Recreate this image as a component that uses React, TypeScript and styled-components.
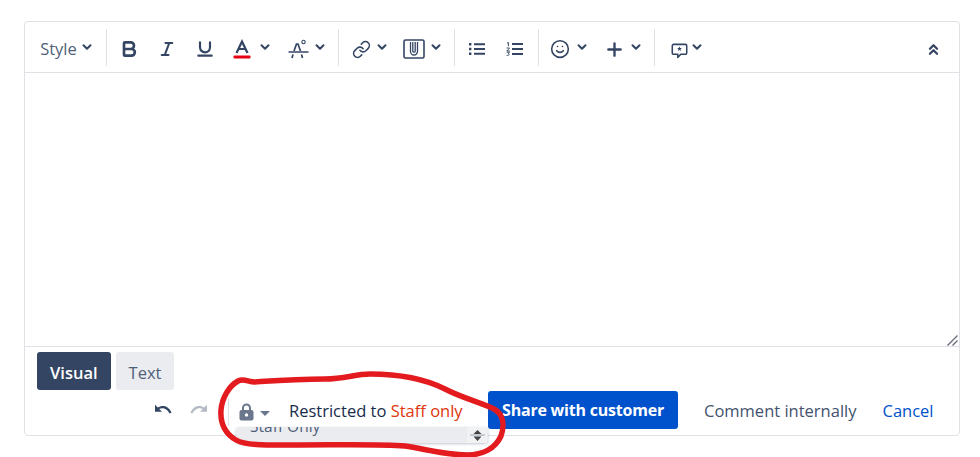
import React from 'react'
import styled, { createGlobalStyle } from 'styled-components'
import { Bold, ChevronDown, ChevronsUp, Italic, Link, Plus, Smile, Underline } from 'lucide-react'

const GlobalStyle = createGlobalStyle`
  html, body {
    margin: 0;
    padding: 0;
    background: #fff;
  }
  body {
    font-family: "Open Sans", "Noto Sans", sans-serif;
    color: #344563;
  }
`

const Page = styled.div`
  position: relative;
  width: 980px;
  height: 457px;
  padding: 21px 0 0 24px;
  box-sizing: border-box;
  overflow: hidden;
`
const Card = styled.div`
  position: relative;
  width: 936px;
  height: 415px;
  box-sizing: border-box;
  border: 1px solid #dfe1e6;
  border-radius: 4px;
  display: flex;
  flex-direction: column;
`
const Toolbar = styled.div`
  display: flex;
  align-items: center;
  height: 51px;
  flex: none;
  box-sizing: border-box;
  border-bottom: 1px solid #dfe1e6;
`
const Group = styled.div<{ $w: number; $pad?: number; $last?: boolean }>`
  display: flex;
  align-items: center;
  box-sizing: border-box;
  width: ${props => props.$w}px;
  height: 37px;
  padding-left: ${props => (props.$pad === undefined ? 3 : props.$pad)}px;
  border-right: ${props => (props.$last ? 'none' : '1px solid #dfe1e6')};
`
const ToolButton = styled.div<{ $w: number; $gap?: number }>`
  display: flex;
  align-items: center;
  justify-content: center;
  gap: ${props => props.$gap || 4}px;
  width: ${props => props.$w}px;
  height: 30px;
  padding-top: 4px;
  flex: none;
  color: #344563;
`
const ChevronWrap = styled.span`
  display: flex;
  margin-bottom: 4px;
`
const StyleLabel = styled.span`
  font-size: 16.5px;
  color: #505f79;
  margin-bottom: 2px;
`
const Collapse = styled.div`
  margin-left: auto;
  margin-right: 17px;
  padding-top: 4px;
  display: flex;
  color: #344563;
`
const EditorWrap = styled.div`
  position: relative;
  flex: none;
  height: 274px;
`
const Editor = styled.textarea`
  display: block;
  width: 100%;
  height: 100%;
  box-sizing: border-box;
  border: none;
  border-bottom: 1px solid #dfe1e6;
  outline: none;
  resize: none;
  margin: 0;
  padding: 8px;
  background: #fff;
`
const ResizeGrip = styled.svg`
  position: absolute;
  right: 1px;
  bottom: 1px;
  pointer-events: none;
`
const Tabs = styled.div`
  display: flex;
  gap: 5px;
  padding: 5px 0 0 12px;
`
const Tab = styled.div<{ $active?: boolean }>`
  height: 38px;
  box-sizing: border-box;
  padding: 2px 13px 0;
  display: flex;
  align-items: center;
  border-radius: 3px;
  font-size: 16.5px;
  font-weight: ${props => (props.$active ? 600 : 400)};
  background: ${props => (props.$active ? '#344563' : '#ebecf0')};
  color: ${props => (props.$active ? '#fff' : '#505f79')};
`
const ActionRow = styled.div`
  position: relative;
  display: flex;
  align-items: center;
  height: 38px;
  margin-top: 1px;
  padding-left: 128px;
`
const HistoryButton = styled.div<{ $disabled?: boolean }>`
  display: flex;
  width: 20px;
  margin-right: 16px;
  color: ${props => (props.$disabled ? '#b3bac5' : '#344563')};
`
const Restriction = styled.div`
  position: relative;
  z-index: 1;
  display: flex;
  align-items: center;
  width: 251px;
  height: 28px;
  margin-left: 3px;
  margin-top: 3px;
  box-sizing: border-box;
  border-left: 1px solid #dfe1e6;
  background: #fff;
  padding-left: 10px;
`
const LockWrap = styled.div`
  display: flex;
  align-items: center;
  gap: 6px;
  width: 50px;
  flex: none;
  color: #6b778c;
`
const Caret = styled.svg`
  margin-top: 4px;
`
const CommentIcon = styled.svg`
  margin-top: 4px;
`
const RestrictionText = styled.span`
  font-size: 16.5px;
  color: #172b4d;
  white-space: nowrap;
  margin-bottom: 3px;
`
const StaffOnly = styled.span`
  color: #de350b;
`
const HiddenSelect = styled.div`
  position: absolute;
  left: 211px;
  top: 36px;
  width: 252px;
  height: 16px;
  background: #ebecf0;
  border-radius: 3px;
  box-shadow: 0 1px 3px rgba(9, 30, 66, 0.25);
  overflow: hidden;
  font-size: 15.5px;
  color: #505f79;
`
const SelectValue = styled.span`
  position: absolute;
  left: 14px;
  top: -12px;
`
const SelectArrows = styled.div`
  position: absolute;
  right: 1px;
  top: 0;
  width: 20px;
  height: 16px;
  display: flex;
  align-items: center;
  justify-content: center;
  background: #f1f2f4;
  color: #444;
`
const ShareButton = styled.div`
  height: 38px;
  width: 190px;
  flex: none;
  margin-left: 9px;
  display: flex;
  align-items: center;
  justify-content: center;
  background: #0052cc;
  color: #fff;
  border-radius: 3px;
  font-size: 16px;
  font-weight: 700;
  letter-spacing: -0.22px;
  white-space: nowrap;
`
const TextAction = styled.div<{ $link?: boolean; $ml: number }>`
  margin-left: ${props => props.$ml}px;
  font-size: 16.5px;
  white-space: nowrap;
  color: ${props => (props.$link ? '#0052cc' : '#42526e')};
`
const Scribble = styled.svg`
  position: absolute;
  left: 0;
  top: 0;
  z-index: 5;
  pointer-events: none;
`

const Chevron = () => (
  <ChevronWrap>
    <ChevronDown size={14} strokeWidth={3.4} />
  </ChevronWrap>
)

const App: React.FC = () => (
  <Page>
    <GlobalStyle />
    <Card>
      <Toolbar>
        <Group $w={82} $pad={14}>
          <ToolButton $w={56} $gap={3}>
            <StyleLabel>Style</StyleLabel>
            <Chevron />
          </ToolButton>
        </Group>
        <Group $w={232}>
          <ToolButton $w={38}>
            <Bold size={20} strokeWidth={3.2} />
          </ToolButton>
          <ToolButton $w={37}>
            <Italic size={18} strokeWidth={2.8} />
          </ToolButton>
          <ToolButton $w={39}>
            <Underline size={20} strokeWidth={2.6} />
          </ToolButton>
          <ToolButton $w={56} $gap={7}>
            <svg width="18" height="20" viewBox="0 0 18 20" fill="none">
              <path d="M3.5 14 9 2.5 14.5 14M5.5 10h7" stroke="currentColor" strokeWidth="2.2" />
              <rect x="0.5" y="16.5" width="17" height="3" rx="1" fill="#e60012" />
            </svg>
            <Chevron />
          </ToolButton>
          <ToolButton $w={55}>
            <svg width="21" height="20" viewBox="0 0 21 20" fill="none" stroke="currentColor">
              <path d="M6 12 8.5 5h1.5L12.5 12" strokeWidth="1.7" />
              <circle cx="15.5" cy="3" r="1.7" strokeWidth="1.1" />
              <path d="M0.5 13h20" strokeWidth="1.5" />
              <path d="M5 15.5 4 19M13.5 15.5l1 3.5" strokeWidth="1.7" />
            </svg>
            <Chevron />
          </ToolButton>
        </Group>
        <Group $w={116}>
          <ToolButton $w={56}>
            <Link size={19} strokeWidth={2} />
            <Chevron />
          </ToolButton>
          <ToolButton $w={50}>
            <svg width="22" height="20" viewBox="0 0 22 20" fill="none" stroke="currentColor">
              <rect x="1" y="1" width="20" height="18" rx="1.5" strokeWidth="1.6" />
              <path d="M7.5 3v9.5a3.5 3.5 0 0 0 7 0V3M9.8 3v9a1.2 1.2 0 0 0 2.4 0V3" strokeWidth="1.3" />
            </svg>
            <Chevron />
          </ToolButton>
        </Group>
        <Group $w={84}>
          <ToolButton $w={38}>
            <svg width="16" height="12" viewBox="0 0 16 12" fill="none">
              <path d="M5 1.2h11M5 6h11M5 10.8h11" stroke="currentColor" strokeWidth="2" />
              <path d="M0 0h2.4v2.4H0ZM0 4.8h2.4v2.4H0ZM0 9.6h2.4V12H0Z" fill="currentColor" />
            </svg>
          </ToolButton>
          <ToolButton $w={37}>
            <svg width="17" height="14" viewBox="0 0 17 14" fill="none" stroke="currentColor">
              <path d="M6 2h11M6 7h11M6 12h11" strokeWidth="2" />
              <path d="M1 1 2.4.6v3.6" strokeWidth="1" />
              <path d="M.6 6h3L.8 9h3M.6 10.2h3L2 11.6c1.8 0 1.8 2-1.4 1.8" strokeWidth=".9" />
            </svg>
          </ToolButton>
        </Group>
        <Group $w={116}>
          <ToolButton $w={54} $gap={5}>
            <Smile size={20} strokeWidth={1.9} />
            <Chevron />
          </ToolButton>
          <ToolButton $w={54}>
            <Plus size={21} strokeWidth={2.7} />
            <Chevron />
          </ToolButton>
        </Group>
        <Group $w={60} $pad={16} $last>
          <ToolButton $w={33} $gap={2}>
            <CommentIcon width="20" height="18" viewBox="0 0 20 18" fill="none">
              <path
                d="M3 1.2h14a1.5 1.5 0 0 1 1.5 1.5v8.6a1.5 1.5 0 0 1-1.5 1.5h-5.5L8 16.6v-3.8H3a1.5 1.5 0 0 1-1.5-1.5V2.7A1.5 1.5 0 0 1 3 1.2Z"
                stroke="currentColor"
                strokeWidth="1.8"
                strokeLinejoin="round"
              />
              <path d="m10 3.6.8 1.9 2 .1-1.6 1.3.6 2-1.8-1.1-1.8 1.1.6-2-1.6-1.3 2-.1Z" fill="currentColor" />
            </CommentIcon>
            <Chevron />
          </ToolButton>
        </Group>
        <Collapse>
          <ChevronsUp size={17} strokeWidth={3.2} />
        </Collapse>
      </Toolbar>
      <EditorWrap>
        <Editor />
        <ResizeGrip width="11" height="11" viewBox="0 0 11 11" fill="none" stroke="#666c78" strokeWidth="1.4">
          <path d="M0.5 10.5 10.5 0.5M5.5 10.5l5-5" />
        </ResizeGrip>
      </EditorWrap>
      <Tabs>
        <Tab $active>Visual</Tab>
        <Tab>Text</Tab>
      </Tabs>
      <ActionRow>
        <HistoryButton>
          <svg width="20" height="12" viewBox="0 0 20 12" fill="none">
            <path d="M2 0.8v7h7L6.2 5C9 3.6 13.5 3.6 16.6 9.6l2-1C15.2 1.4 9 .7 4.8 3.5Z" fill="currentColor" />
          </svg>
        </HistoryButton>
        <HistoryButton $disabled>
          <svg width="20" height="12" viewBox="0 0 20 12" fill="none">
            <path d="M18 0.8v7h-7L13.8 5C11 3.6 6.5 3.6 3.4 9.6l-2-1C4.8 1.4 11 .7 15.2 3.5Z" fill="currentColor" />
          </svg>
        </HistoryButton>
        <Restriction>
          <LockWrap>
            <svg width="15" height="18" viewBox="0 0 15 18" fill="none">
              <path d="M4 8V5a3.5 3.5 0 0 1 7 0v3" stroke="currentColor" strokeWidth="2" />
              <rect x="0.5" y="7" width="14" height="10.5" rx="2" fill="currentColor" />
              <circle cx="7.5" cy="12" r="1.7" fill="#fff" />
            </svg>
            <Caret width="10" height="5" viewBox="0 0 10 5">
              <path d="M0 0h10L5 5Z" fill="currentColor" />
            </Caret>
          </LockWrap>
          <RestrictionText>
            Restricted to <StaffOnly>Staff only</StaffOnly>
          </RestrictionText>
        </Restriction>
        <HiddenSelect>
          <SelectValue>Staff Only</SelectValue>
          <SelectArrows>
            <svg width="15" height="14" viewBox="0 0 15 14">
              <path d="M7.5 2 11.5 6h-8ZM7.5 13 11.5 8.5h-8Z" fill="currentColor" />
              <path d="M0 7h15" stroke="#9aa3b2" strokeWidth="1" />
            </svg>
          </SelectArrows>
        </HiddenSelect>
        <ShareButton>Share with customer</ShareButton>
        <TextAction $ml={26}>Comment internally</TextAction>
        <TextAction $ml={26} $link>
          Cancel
        </TextAction>
      </ActionRow>
    </Card>
    <Scribble width="980" height="457" viewBox="0 0 980 457" fill="none">
      <path
        d="M238 381C229 386 222 398 221 410C220 424 226 434 236 440C246 446 270 445 300 445C340 445 380 444 405 446C425 449 445 455 467 455C482 455 495 449 501 436C505 424 503 414 494 409C480 402 462 398 445 389C425 379 400 374 370 374C355 374 345 379 325 379C295 379 270 381 255 382C248 382 244 378 238 381Z"
        stroke="#e31b1f"
        strokeWidth="5.5"
        strokeLinejoin="round"
      />
    </Scribble>
  </Page>
)

export default App
